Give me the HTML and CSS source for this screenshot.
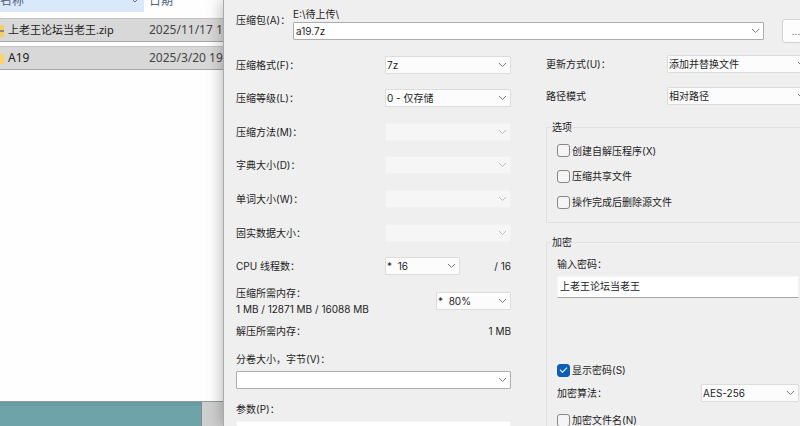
FILE: index.html
```html
<!DOCTYPE html>
<html lang="zh-CN">

<head>
    <meta charset="UTF-8">
    <meta name="viewport" content="width=device-width, initial-scale=1.0">
    <title>添加到压缩包</title>
    <link rel="stylesheet" href="styles.css">
</head>

<body>
    <svg width="0" height="0" class="defs">
        <symbol id="chevron" viewBox="0 0 9 6">
            <path d="M1 1 L4.5 4.5 L8 1" fill="none" stroke="currentColor" stroke-width="1" />
        </symbol>
    </svg>

    <!-- File explorer behind the dialog -->
    <main class="explorer">
        <table class="files">
            <thead>
                <tr>
                    <th class="col-name">名称<svg class="sort" viewBox="0 0 6 4"><path d="M1 1 L3 3 L5 1" fill="none" stroke="#5f7794" /></svg></th>
                    <th>日期</th>
                </tr>
            </thead>
            <tbody>
                <tr>
                    <td class="name"><svg class="file-icon" viewBox="0 0 4 12"><path d="M0 0H3L4 1V12H0Z" fill="#f7cf5c" /><path d="M0 5H4V7H0Z" fill="#8b8f7a" /></svg>上老王论坛当老王.zip</td>
                    <td>2025/11/17 1</td>
                </tr>
            </tbody>
            <tbody>
                <tr>
                    <td class="name latin"><svg class="file-icon" viewBox="0 0 4 12"><path d="M0 1H3L4 3V11H0Z" fill="#fad564" /></svg>A19</td>
                    <td>2025/3/20 19</td>
                </tr>
            </tbody>
        </table>
    </main>
    <div class="desktop">
        <div class="wallpaper"></div>
        <div class="panel"></div>
    </div>

    <!-- Add to archive -->
    <form class="dialog">
        <div class="archive">
            <label for="archive">压缩包(A)：</label>
            <div class="archive-path">
                <div>E:\待上传\</div>
                <div class="combo edit">
                    <input type="text" id="archive" value="a19.7z">
                    <svg class="arrow"><use href="#chevron" /></svg>
                </div>
            </div>
            <button type="button" class="browse">...</button>
        </div>

        <div class="columns">
            <div class="left">
                <div class="rows">
                    <div class="row">
                        <label for="format">压缩格式(F)：</label>
                        <div class="combo wide">
                            <select id="format"><option>7z</option></select>
                            <svg class="arrow"><use href="#chevron" /></svg>
                        </div>
                    </div>
                    <div class="row">
                        <label for="level">压缩等级(L)：</label>
                        <div class="combo wide">
                            <select id="level"><option>0 - 仅存储</option></select>
                            <svg class="arrow"><use href="#chevron" /></svg>
                        </div>
                    </div>
                    <div class="row">
                        <label for="method">压缩方法(M)：</label>
                        <div class="combo wide off">
                            <select id="method" disabled></select>
                            <svg class="arrow"><use href="#chevron" /></svg>
                        </div>
                    </div>
                    <div class="row">
                        <label for="dict">字典大小(D)：</label>
                        <div class="combo wide off">
                            <select id="dict" disabled></select>
                            <svg class="arrow"><use href="#chevron" /></svg>
                        </div>
                    </div>
                    <div class="row">
                        <label for="word">单词大小(W)：</label>
                        <div class="combo wide off">
                            <select id="word" disabled></select>
                            <svg class="arrow"><use href="#chevron" /></svg>
                        </div>
                    </div>
                    <div class="row">
                        <label for="solid">固实数据大小：</label>
                        <div class="combo wide off">
                            <select id="solid" disabled></select>
                            <svg class="arrow"><use href="#chevron" /></svg>
                        </div>
                    </div>
                    <div class="row">
                        <label for="threads">CPU 线程数：</label>
                        <div class="threads">
                            <div class="combo narrow">
                                <select id="threads"><option>*&nbsp; 16</option></select>
                                <svg class="arrow"><use href="#chevron" /></svg>
                            </div>
                            <span>/ 16</span>
                        </div>
                    </div>
                </div>

                <div class="row memory">
                    <label for="memory">压缩所需内存：<br>1 MB / 12871 MB / 16088 MB</label>
                    <div class="combo narrow">
                        <select id="memory"><option>*&nbsp; 80%</option></select>
                        <svg class="arrow"><use href="#chevron" /></svg>
                    </div>
                </div>
                <div class="row unpack">
                    <span>解压所需内存：</span>
                    <span>1 MB</span>
                </div>

                <div class="field">
                    <label for="volume">分卷大小，字节(V)：</label>
                    <div class="combo edit">
                        <input type="text" id="volume">
                        <svg class="arrow"><use href="#chevron" /></svg>
                    </div>
                </div>
                <div class="field">
                    <label for="params">参数(P)：</label>
                    <input type="text" id="params" class="text">
                </div>
            </div>

            <div class="right">
                <div class="row mode">
                    <label for="update">更新方式(U)：</label>
                    <div class="combo">
                        <select id="update"><option>添加并替换文件</option></select>
                        <svg class="arrow"><use href="#chevron" /></svg>
                    </div>
                </div>
                <div class="row mode">
                    <label for="paths">路径模式</label>
                    <div class="combo">
                        <select id="paths"><option>相对路径</option></select>
                        <svg class="arrow"><use href="#chevron" /></svg>
                    </div>
                </div>

                <fieldset>
                    <legend>选项</legend>
                    <div class="group options">
                        <label class="check"><input type="checkbox">创建自解压程序(X)</label>
                        <label class="check"><input type="checkbox">压缩共享文件</label>
                        <label class="check"><input type="checkbox">操作完成后删除源文件</label>
                    </div>
                </fieldset>

                <fieldset>
                    <legend>加密</legend>
                    <div class="group">
                        <label for="password">输入密码：</label>
                        <input type="text" id="password" class="text password" value="上老王论坛当老王">
                        <label class="check show"><input type="checkbox" checked>显示密码(S)</label>
                        <div class="row cipher">
                            <label for="cipher">加密算法：</label>
                            <div class="combo">
                                <select id="cipher"><option>AES-256</option></select>
                                <svg class="arrow"><use href="#chevron" /></svg>
                            </div>
                        </div>
                        <label class="check"><input type="checkbox">加密文件名(N)</label>
                    </div>
                </fieldset>
            </div>
        </div>
    </form>
</body>

</html>
```

FILE: styles.css
```css
* {
    box-sizing: border-box;
}

body {
    margin: 0;
    height: 100vh;
    display: flex;
    flex-direction: column;
    position: relative;
    overflow: hidden;
    background-color: #fefefe;
    color: #1c1c1c;
    font-family: Inter, "Noto Sans CJK SC", sans-serif;
    font-size: 10px;
    line-height: 16px;
}

.defs {
    position: absolute;
}

/* Explorer, its header is scrolled half out of view */
.explorer {
    flex: 1;
    margin-top: -10px;
    font-family: "Noto Sans", "Noto Sans CJK SC", sans-serif;
    border-bottom: 1px solid #8b9a9b;
}

.files {
    width: 100%;
    border-collapse: separate;
    border-spacing: 0;
    table-layout: fixed;
}

.files th {
    height: 22px;
    padding: 0 0 0 5px;
    font-size: 12px;
    font-weight: normal;
    line-height: 22px;
    text-align: left;
    color: #4f6580;
}

.files .col-name {
    width: 144px;
    padding-left: 0;
    background-color: #d9e9f9;
}

.sort {
    float: right;
    width: 6px;
    height: 4px;
    margin: 9px 6px 0 0;
}

.files tbody::before {
    content: "";
    display: block;
    height: 6px;
}

.files tbody + tbody::before {
    height: 4px;
}

.files td {
    height: 24px;
    padding: 0 0 0 5px;
    background-color: #d9d8d9;
    border-top: 1px solid #c4c4c4;
    border-bottom: 1px solid #a6a6a6;
    font-size: 12px;
    white-space: nowrap;
    color: #444;
}

.files .name {
    padding-left: 0;
    font-size: 11px;
    color: #1c1c1c;
}

.files .latin {
    font-size: 12px;
}

.file-icon {
    width: 4px;
    height: 12px;
    margin-right: 4px;
    vertical-align: middle;
}

.desktop {
    display: flex;
    height: 24px;
}

.wallpaper {
    width: 202px;
    background: linear-gradient(#659a9f, #6ea4a9 6px);
    border-right: 1px solid #7c8a8b;
}

.panel {
    flex: 1;
    background-color: #cfcfcf;
}

/* Dialog, its right edge runs off the screen */
.dialog {
    position: absolute;
    top: 0;
    right: -22px;
    bottom: 0;
    left: 223px;
    padding: 6px 12px 0;
    overflow: hidden;
    background-color: #efefef;
    border-left: 1px solid #a9a9a9;
    box-shadow: -2px 0 14px rgba(0, 0, 0, 0.25);
}

input,
select,
button {
    font: inherit;
    color: inherit;
}

.archive {
    display: flex;
    align-items: flex-start;
    height: 37px;
    margin-bottom: 5px;
}

.archive > label {
    width: 57px;
    padding-top: 6px;
}

.archive-path {
    flex: 1;
}

.browse {
    align-self: flex-end;
    width: 28px;
    height: 24px;
    margin-left: 18px;
    padding: 0;
    background-color: #fdfdfd;
    border: 1px solid #d2d2d2;
    border-radius: 3px;
    color: #666;
}

.columns {
    display: grid;
    grid-template-columns: 275px 1fr;
    column-gap: 35px;
}

.row {
    display: flex;
    align-items: center;
    justify-content: space-between;
}

.rows {
    display: grid;
    grid-template-rows: repeat(7, 1fr);
    height: 235px;
}

/* Drop-downs */
.combo {
    position: relative;
    height: 18px;
}

.combo select,
.combo input {
    display: block;
    width: 100%;
    height: 100%;
    margin: 0;
    padding: 0 18px 0 1px;
    appearance: none;
    background-color: #fcfcfc;
    border: 1px solid #dcdcdc;
    border-radius: 1px;
    line-height: 16px;
}

.combo.edit input {
    padding-left: 2px;
    background-color: #fff;
    border-color: #a9adac;
}

.combo.off select {
    border-color: #f4f4f4;
    background-color: #f9f9f9;
}

.arrow {
    position: absolute;
    top: 6px;
    right: 4px;
    width: 9px;
    height: 6px;
    color: #777;
    pointer-events: none;
}

.off .arrow {
    color: #bbb;
}

.wide {
    width: 126px;
}

.narrow {
    width: 75px;
}

.threads {
    display: flex;
    align-items: center;
    justify-content: space-between;
    width: 126px;
}

.memory {
    margin-top: 2px;
}

.unpack {
    margin-top: 6px;
}

.field {
    margin-top: 12px;
}

.field label {
    display: block;
    margin-bottom: 4px;
}

.text {
    display: block;
    width: 100%;
    height: 22px;
    padding: 0 2px;
    background-color: #fff;
    border: 1px solid #f4f4f4;
    border-bottom-color: #a5a5a5;
}

.mode {
    height: 32px;
}

.mode .combo {
    width: 143px;
}

/* Group boxes */
fieldset {
    min-width: 0;
    margin: 7px 0 0;
    padding: 0 4px;
    border: 1px solid #e0e0e0;
}

fieldset + fieldset {
    margin-top: 11px;
}

legend {
    padding: 0 1px;
}

.group {
    padding: 6px;
}

.group > label {
    display: block;
}

.options {
    display: grid;
    grid-template-rows: repeat(3, 1fr);
    height: 87px;
    padding: 3px 6px 7px;
}

.group > .check {
    display: flex;
    align-items: center;
    gap: 2px;
}

.check input {
    flex: none;
    display: grid;
    place-items: center;
    width: 13px;
    height: 13px;
    margin: 0;
    appearance: none;
    background-color: #f5f5f5;
    border: 1px solid #868686;
    border-radius: 3px;
}

.check input:checked {
    background-color: #0b5fb8;
    border-color: #0b5fb8;
}

.check input:checked::before {
    content: "";
    width: 6px;
    height: 3px;
    margin-bottom: 2px;
    border: solid #fff;
    border-width: 0 0 1px 1px;
    transform: rotate(-45deg);
}

.password {
    margin: 4px 0 64px;
    padding-bottom: 4px;
}

.cipher {
    height: 18px;
    margin: 6px 0 10px;
}

.cipher .combo {
    width: 98px;
}
```
